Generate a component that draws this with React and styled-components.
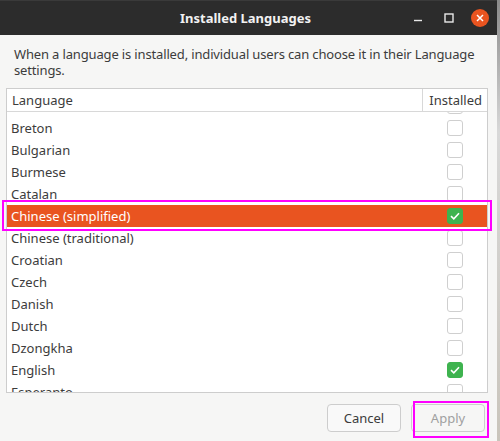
import React, { useLayoutEffect, useRef } from "react";
import styled, { createGlobalStyle } from "styled-components";

const GlobalStyle = createGlobalStyle`
  html, body {
    margin: 0;
    padding: 0;
    background: #cfcfcf;
  }
  body {
    font-family: "Noto Sans", "DejaVu Sans", sans-serif;
  }
`;

const Page = styled.div`
  width: 500px;
  height: 441px;
  overflow: hidden;
  position: relative;
  background: linear-gradient(180deg, #8a8a8a 0%, #d8d8d8 30%, #c9c4bb 100%);
`;

const Window = styled.div`
  width: 497px;
  height: 441px;
  display: flex;
  flex-direction: column;
  background: #f6f6f5;
`;

const TitleBar = styled.div`
  height: 35px;
  flex: none;
  background: #2c2c2c;
  border-top: 1px solid #3a3a3a;
  box-sizing: border-box;
  display: grid;
  grid-template-columns: 1fr auto 1fr;
  align-items: center;
  padding: 0 8px 0 0;
`;

const Title = styled.div`
  grid-column: 2;
  color: #f2f2f2;
  font-weight: 700;
  font-size: 13px;
  padding: 0 0 0 2px;
`;

const Controls = styled.div`
  grid-column: 3;
  justify-self: end;
  display: flex;
  align-items: center;
  gap: 13px;
`;

const CtrlButton = styled.div`
  width: 18px;
  height: 18px;
  display: flex;
  align-items: center;
  justify-content: center;
  border-radius: 50%;
  background: ${(p) => (p.$close ? "#e95420" : "transparent")};
`;

const Body = styled.div`
  flex: 1;
  display: flex;
  flex-direction: column;
  padding: 11px 10px 9px 6px;
  color: #3c3c3c;
`;

const Intro = styled.p`
  margin: 0 0 10px 8px;
  font-size: 13px;
  line-height: 16px;
  letter-spacing: -0.15px;
`;

const ListBox = styled.div`
  width: 482px;
  border: 1px solid #cdcdcd;
  box-sizing: border-box;
  background: #ffffff;
  display: flex;
  flex-direction: column;
`;

const HeaderRow = styled.div`
  height: 23px;
  box-sizing: border-box;
  display: grid;
  grid-template-columns: 1fr 65px;
  border-bottom: 1px solid #d8d8d8;
  font-size: 13px;
`;

const HeaderCell = styled.div`
  display: flex;
  align-items: center;
  padding: ${(p) => (p.$right ? "0 5px 0 0" : "0 0 0 5px")};
  justify-content: ${(p) => (p.$right ? "flex-end" : "flex-start")};
  border-left: ${(p) => (p.$right ? "1px solid #d8d8d8" : "none")};
`;

const Rows = styled.div`
  height: 280px;
  overflow: hidden;
`;

const Row = styled.div`
  height: 22px;
  display: grid;
  grid-template-columns: 1fr 65px;
  align-items: center;
  font-size: 13px;
  background: ${(p) => (p.$selected ? "#e95420" : "transparent")};
  color: ${(p) => (p.$selected ? "#ffffff" : "#3c3c3c")};
`;

const RowName = styled.div`
  padding-left: 4px;
  white-space: nowrap;
`;

const CheckCell = styled.div`
  display: flex;
  justify-content: center;
  padding-left: 1px;
`;

const Check = styled.div`
  width: 16px;
  height: 16px;
  box-sizing: border-box;
  border-radius: 3px;
  border: 1px solid ${(p) => (p.$on ? "#3eb34f" : "#cfcfcf")};
  background: ${(p) => (p.$on ? "#3eb34f" : "#ffffff")};
  display: flex;
  align-items: center;
  justify-content: center;
`;

const Footer = styled.div`
  margin-top: auto;
  display: flex;
  justify-content: flex-end;
  gap: 10px;
  padding-right: 2px;
`;

const Button = styled.div`
  width: 74px;
  height: 28px;
  box-sizing: border-box;
  border: 1px solid #cdcdcd;
  border-radius: 4px;
  background: ${(p) => (p.$disabled ? "#f6f6f5" : "#f9f9f9")};
  color: ${(p) => (p.$disabled ? "#a0a0a0" : "#3c3c3c")};
  font-size: 13px;
  display: flex;
  align-items: center;
  justify-content: center;
`;

const Mark = styled.div`
  position: absolute;
  left: ${(p) => p.$x}px;
  top: ${(p) => p.$y}px;
  width: ${(p) => p.$w}px;
  height: ${(p) => p.$h}px;
  border: 2px solid #ff00ff;
  box-sizing: border-box;
  pointer-events: none;
`;

const languages = [
  ["Bosnian", false],
  ["Breton", false],
  ["Bulgarian", false],
  ["Burmese", false],
  ["Catalan", false],
  ["Chinese (simplified)", true],
  ["Chinese (traditional)", false],
  ["Croatian", false],
  ["Czech", false],
  ["Danish", false],
  ["Dutch", false],
  ["Dzongkha", false],
  ["English", true],
  ["Esperanto", false],
  ["Estonian", false],
];

function Tick() {
  return (
    <svg width="10" height="8" viewBox="0 0 10 8">
      <path d="M1 4.2 L3.8 6.8 L9 1.2" fill="none" stroke="#fff" strokeWidth="1.6" />
    </svg>
  );
}

export default function App() {
  const rowsRef = useRef(null);
  useLayoutEffect(() => {
    if (rowsRef.current) rowsRef.current.scrollTop = 17;
  }, []);

  return (
    <Page>
      <GlobalStyle />
      <Window>
        <TitleBar>
          <Title>Installed Languages</Title>
          <Controls>
            <CtrlButton>
              <svg width="10" height="10" viewBox="0 0 10 10">
                <path d="M1 7.5 H9" stroke="#e8e8e8" strokeWidth="1.4" />
              </svg>
            </CtrlButton>
            <CtrlButton>
              <svg width="10" height="10" viewBox="0 0 10 10">
                <rect x="1" y="1" width="8" height="8" fill="none" stroke="#e8e8e8" strokeWidth="1.4" />
              </svg>
            </CtrlButton>
            <CtrlButton $close>
              <svg width="8" height="8" viewBox="0 0 8 8">
                <path d="M1 1 L7 7 M7 1 L1 7" stroke="#fff" strokeWidth="1.5" />
              </svg>
            </CtrlButton>
          </Controls>
        </TitleBar>
        <Body>
          <Intro>
            When a language is installed, individual users can choose it in their Language settings.
          </Intro>
          <ListBox>
            <HeaderRow>
              <HeaderCell>Language</HeaderCell>
              <HeaderCell $right>Installed</HeaderCell>
            </HeaderRow>
            <Rows ref={rowsRef}>
              {languages.map(([name, on]) => (
                <Row key={name} $selected={name === "Chinese (simplified)"}>
                  <RowName>{name}</RowName>
                  <CheckCell>
                    <Check $on={on}>{on && <Tick />}</Check>
                  </CheckCell>
                </Row>
              ))}
            </Rows>
          </ListBox>
          <Footer>
            <Button>Cancel</Button>
            <Button $disabled>Apply</Button>
          </Footer>
        </Body>
      </Window>
      <Mark $x={2} $y={200} $w={490} $h={31} />
      <Mark $x={413} $y={401} $w={76} $h={37} />
    </Page>
  );
}
